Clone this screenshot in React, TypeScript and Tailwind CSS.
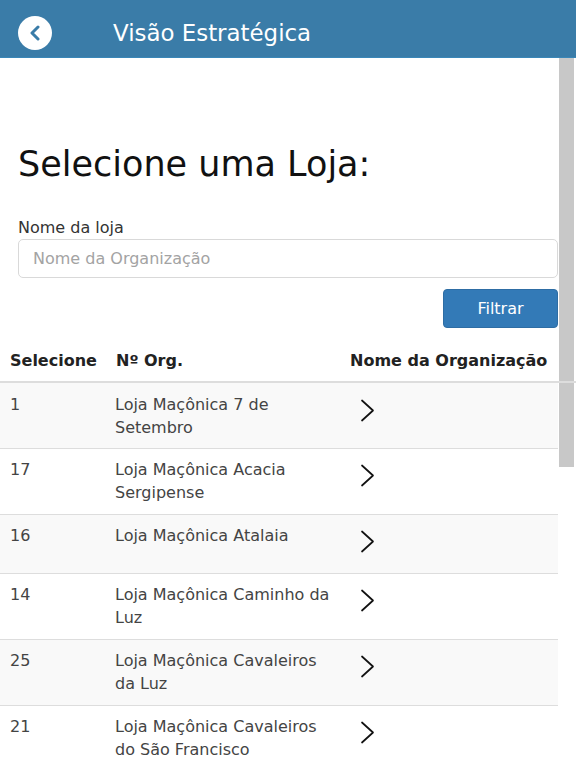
import React from "react";

const rows = [
  { id: "1", name: "Loja Maçônica 7 de Setembro", h: "h-[66px]", bg: "bg-[#f9f9f9]", t: "pt-[10px]", c: "pt-[16px]" },
  { id: "17", name: "Loja Maçônica Acacia Sergipense", h: "h-[66px]", bg: "bg-white", t: "pt-[9px]", c: "pt-[15px]" },
  { id: "16", name: "Loja Maçônica Atalaia", h: "h-[59px]", bg: "bg-[#f9f9f9]", t: "pt-[9px]", c: "pt-[15px]" },
  { id: "14", name: "Loja Maçônica Caminho da Luz", h: "h-[66px]", bg: "bg-white", t: "pt-[9px]", c: "pt-[15px]" },
  { id: "25", name: "Loja Maçônica Cavaleiros da Luz", h: "h-[66px]", bg: "bg-[#f9f9f9]", t: "pt-[9px]", c: "pt-[15px]" },
  { id: "21", name: "Loja Maçônica Cavaleiros do São Francisco", h: "h-[66px]", bg: "bg-white", t: "pt-[9px]", c: "pt-[15px]" },
];

function Chevron() {
  return (
    <svg width="15" height="23" viewBox="0 0 15 23" fill="none" stroke="#111" strokeWidth="1.7" strokeLinecap="round" strokeLinejoin="round">
      <path d="M2 1.5l11 10L2 21.5" />
    </svg>
  );
}

export default function App() {
  return (
    <div className="relative h-[768px] w-[576px] overflow-hidden bg-white font-['DejaVu_Sans','Liberation_Sans',sans-serif] text-[#333]">
      <header className="flex h-[58px] items-center border-b border-[#3a87b8] bg-[#3a7ca8] pt-[9px]">
        <div className="ml-[18px] flex h-[34px] w-[34px] items-center justify-center rounded-full bg-white">
          <svg width="12" height="16" viewBox="0 0 12 16" fill="none" stroke="#3a7ca8" strokeWidth="3" strokeLinecap="round" strokeLinejoin="round">
            <path d="M9 2L3 8l6 6" />
          </svg>
        </div>
        <h1 className="ml-[61px] text-[22.9px] font-normal text-white">Visão Estratégica</h1>
      </header>

      <div className="absolute right-[2px] top-[58px] h-[409px] w-[15px] bg-[#c8c8c8]" />

      <main>
        <div className="pl-[18px] pr-[18px]">
          <h2 className="mt-[84px] text-[35px] leading-[44px] font-normal text-[#111]">Selecione uma Loja:</h2>
          <label className="mt-[32px] block text-[16px] leading-[20px] text-[#333]">Nome da loja</label>
          <input
            readOnly
            placeholder="Nome da Organização"
            className="mt-[1px] block h-[39px] w-[540px] rounded-[5px] border border-[#d9d9d9] bg-white px-[14px] text-[16px] placeholder:text-[#a3a3a3] outline-none"
          />
          <div className="mt-[11px] flex justify-end">
            <button className="h-[39px] w-[115px] rounded-[4px] border border-[#2e6da4] bg-[#337ab7] text-[16px] font-normal text-white">Filtrar</button>
          </div>
        </div>

        <div className="relative">
          <div className="mt-[13px] flex h-[42px] items-center border-b-2 border-[#ddd] text-[16px] font-bold text-[#222]">
            <div className="w-[115px] pl-[10px]">Selecione</div>
            <div className="w-[235px] pl-[1px]">Nº Org.</div>
            <div>Nome da Organização</div>
          </div>
          <div className="w-[558px]">
            {rows.map((r) => (
              <div key={r.id} className={`flex border-b border-[#ddd] ${r.h} ${r.bg} text-[16px] leading-[23px] text-[#444]`}>
                <div className={`w-[115px] pl-[10px] ${r.t}`}>{r.id}</div>
                <div className={`w-[235px] pr-[15px] ${r.t}`}>{r.name}</div>
                <div className={`pl-[10px] ${r.c}`}><Chevron /></div>
              </div>
            ))}
          </div>
        </div>
      </main>
    </div>
  );
}
